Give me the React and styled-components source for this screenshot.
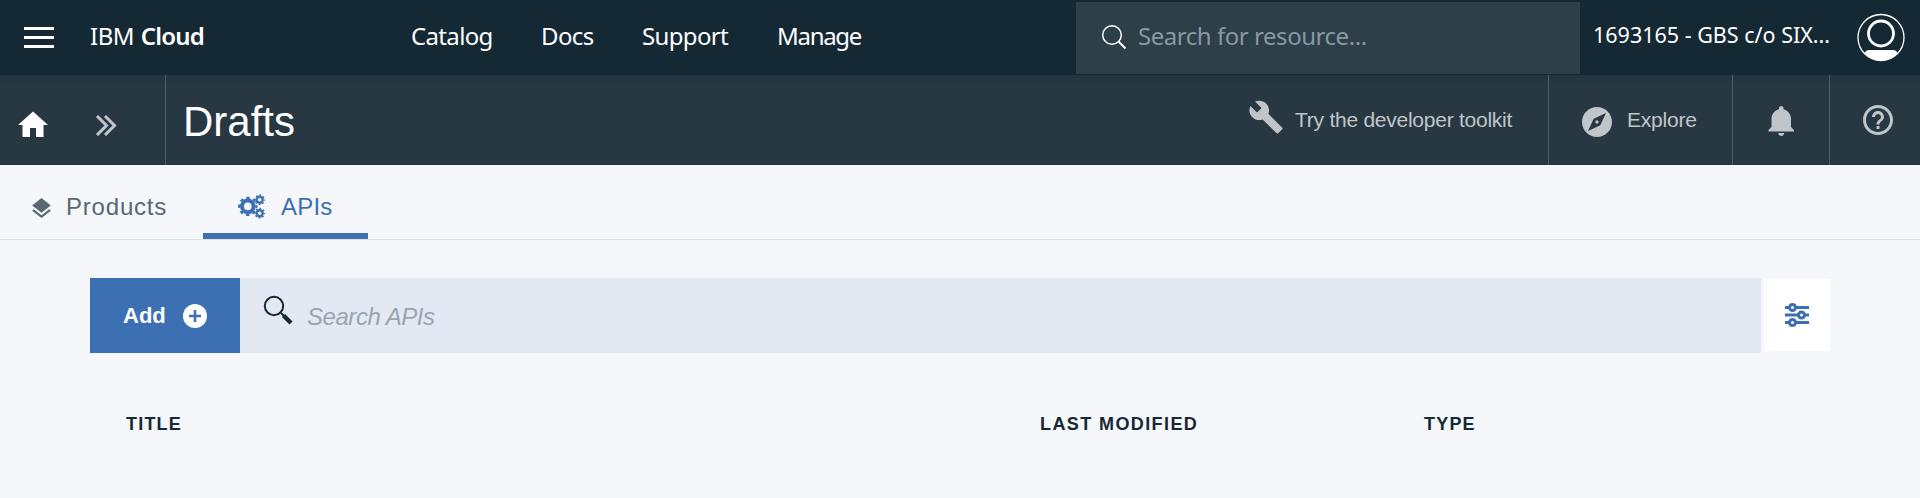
import React from "react";
import styled, { createGlobalStyle } from "styled-components";

const Global = createGlobalStyle`
  * { box-sizing: border-box; }
  html, body { margin: 0; padding: 0; background: #f5f7fb; }
  body { font-family: "Liberation Sans", Arial, sans-serif; color: #152935; height: 498px; overflow: hidden; }
`;

const plex = `"Noto Sans", sans-serif`;

const Page = styled.div`
  width: 1920px;
  height: 498px;
  background: #f5f7fb;
  overflow: hidden;
`;

const TopBar = styled.header`
  display: flex;
  height: 75px;
  background: #152935;
  color: #fff;
  font-family: ${plex};
`;

const MenuButton = styled.div`
  width: 90px;
  padding: 27px 0 0 24px;
`;

const MenuLine = styled.div`
  width: 30px;
  height: 3px;
  margin-bottom: 6px;
  background: #fff;
`;

const Label = styled.div`
  flex: none;
  width: ${(p) => p.$w}px;
  padding-top: ${(p) => p.$top || 0}px;
  font-size: ${(p) => p.$size || 24}px;
  line-height: 30px;
  letter-spacing: ${(p) => p.$ls || 0}px;
  white-space: nowrap;
`;

const BrandStrong = styled.b`
  font-weight: 600;
  letter-spacing: -0.8px;
  margin-left: 1px;
`;

const ResourceSearch = styled.div`
  display: flex;
  width: 504px;
  height: 72px;
  margin-top: 2px;
  padding-left: 24px;
  background: #2d3f49;
  color: #8897a2;
`;

const Account = styled.div`
  display: flex;
  width: 340px;
  padding-left: 13px;
`;

const Slot = styled.div`
  flex: none;
  display: flex;
  width: ${(p) => p.$w}px;
  padding: ${(p) => p.$pad};
  svg { display: block; flex: none; }
`;

const SubBar = styled.div`
  display: flex;
  height: 90px;
  background: linear-gradient(#23343e, #273842 12px, #273842 88px, #21323c);
  color: #c0c5c9;
`;

const SubCell = styled.div`
  flex: none;
  display: flex;
  width: ${(p) => p.$w}px;
  border-right: ${(p) => (p.$divider ? "1px solid #4e5d66" : "none")};
`;

const Title = styled.h1`
  margin: 0;
  padding: 23px 0 0 17px;
  color: #fff;
  font-size: 42px;
  font-weight: 400;
  line-height: 48px;
`;

const Tabs = styled.nav`
  display: flex;
  height: 75px;
  border-bottom: 1px solid #dde0e4;
`;

const Tab = styled.div`
  display: flex;
  width: ${(p) => p.$w}px;
  color: ${(p) => (p.$active ? "#3d70b2" : "#5a6872")};
  border-bottom: ${(p) => (p.$active ? "6px solid #3d70b2" : "none")};
`;

const Toolbar = styled.div`
  display: flex;
  margin: 38px 90px 0;
  height: 75px;
`;

const AddButton = styled.div`
  display: flex;
  width: 150px;
  padding-left: 33px;
  background: #3d70b2;
  color: #fff;
  font-weight: 700;
`;

const ApiSearch = styled.div`
  display: flex;
  width: 1521px;
  background: #e2e9f3;
  color: #9aa5ae;
  font-style: italic;
`;

const FilterButton = styled.div`
  width: 66px;
  height: 72px;
  margin: 1px 0 0 3px;
  padding: 24px 0 0 21px;
  background: #fff;
  svg { display: block; }
`;

const TableHead = styled.div`
  display: flex;
  padding: 56px 0 0 126px;
  font-weight: 700;
`;

const Icon = ({ size = 36, d }) => (
  <svg width={size} height={size} viewBox="0 0 24 24" fill="currentColor">
    <path d={d} />
  </svg>
);

const Gear = ({ cx, cy, r, w, teeth, tooth }) => {
  const outer = r + w / 2 + tooth / 2 - 0.3;
  const step = (2 * Math.PI * outer) / teeth / 2;
  return (
    <g fill="none" stroke="currentColor">
      <circle cx={cx} cy={cy} r={r} strokeWidth={w} />
      <circle
        cx={cx}
        cy={cy}
        r={outer}
        strokeWidth={tooth}
        strokeDasharray={`${step} ${step}`}
        strokeDashoffset={step / 2}
      />
    </g>
  );
};

export default function App() {
  return (
    <Page>
      <Global />
      <TopBar>
        <MenuButton>
          <MenuLine />
          <MenuLine />
          <MenuLine />
        </MenuButton>
        <Label $w={321} $top={21} $ls={-0.5}>
          IBM <BrandStrong>Cloud</BrandStrong>
        </Label>
        <Label $w={130} $top={21} $ls={-0.65}>Catalog</Label>
        <Label $w={101} $top={21} $ls={-0.6}>Docs</Label>
        <Label $w={135} $top={21} $ls={-0.65}>Support</Label>
        <Label $w={299} $top={21} $ls={-1.3}>Manage</Label>
        <ResourceSearch>
          <Slot $w={38} $pad="22px 0 0 1px">
            <svg width="26" height="26" viewBox="0 0 26 26" fill="none" stroke="#fff" strokeWidth="1.5">
              <circle cx="11" cy="11" r="9.3" />
              <path d="M17.5 17.5L24.5 24.5" strokeWidth="2" />
            </svg>
          </Slot>
          <Label $w={400} $top={19} $ls={-0.46}>Search for resource...</Label>
        </ResourceSearch>
        <Account>
          <Label $w={263} $top={20} $size={21.5}>1693165 - GBS c/o SIX...</Label>
          <Slot $w={50} $pad="13px 0 0 0">
            <svg width="50" height="50" viewBox="0 0 50 50" fill="none" stroke="#fff">
              <circle cx="25" cy="24.5" r="23" strokeWidth="1.3" />
              <circle cx="25" cy="20.5" r="12.5" strokeWidth="2.8" />
              <path d="M8.5 40Q10 37 13 37H37Q40 37 41.5 40Q35 47.5 25 47.5T8.5 40Z" fill="#fff" stroke="none" />
            </svg>
          </Slot>
        </Account>
      </TopBar>

      <SubBar>
        <SubCell $w={166} $divider>
          <Slot $w={95} $pad="32px 0 0 15px">
            <svg width="36" height="36" viewBox="0 0 24 24" fill="#fff">
              <path d="M10 20v-6h4v6h5v-8h3L12 3 2 12h3v8z" />
            </svg>
          </Slot>
          <Slot $w={40} $pad="39px 0 0 0">
            <svg width="22" height="23" viewBox="0 0 22 23" fill="none" stroke="currentColor" strokeWidth="3">
              <path d="M2 2L11.5 11.5L2 21M10 2L19.5 11.5L10 21" />
            </svg>
          </Slot>
        </SubCell>
        <SubCell $w={1081}>
          <Title>Drafts</Title>
        </SubCell>
        <SubCell $w={302} $divider>
          <Slot $w={48} $pad="24px 0 0 1px">
            <Icon d="M22.7 19l-9.1-9.1c.9-2.3.4-5-1.5-6.9-2-2-5-2.4-7.4-1.3L9 6 6 9 1.6 4.7C.4 7.1.9 10.1 2.9 12.1c1.9 1.9 4.6 2.4 6.9 1.5l9.1 9.1c.4.4 1 .4 1.4 0l2.3-2.3c.5-.4.5-1.1.1-1.4z" />
          </Slot>
          <Label $w={240} $top={30} $size={21} $ls={-0.25}>Try the developer toolkit</Label>
        </SubCell>
        <SubCell $w={184} $divider>
          <Slot $w={78} $pad="29px 0 0 30px">
            <Icon d="M12 10.9c-.61 0-1.1.49-1.1 1.1s.49 1.1 1.1 1.1c.61 0 1.1-.49 1.1-1.1s-.49-1.1-1.1-1.1zM12 2C6.48 2 2 6.48 2 12s4.48 10 10 10 10-4.48 10-10S17.52 2 12 2zm2.19 12.19L6 18l3.81-8.19L18 6l-3.81 8.19z" />
          </Slot>
          <Label $w={90} $top={30} $size={21} $ls={-0.2}>Explore</Label>
        </SubCell>
        <SubCell $w={97} $divider>
          <Slot $w={80} $pad="28px 0 0 31px">
            <Icon d="M11.5 22c1.1 0 2-.9 2-2h-4c0 1.1.9 2 2 2zm6.5-6v-5.5c0-3.07-2.13-5.64-5-6.32V3.5c0-.83-.67-1.5-1.5-1.5S10 2.67 10 3.5v.68c-2.87.68-5 3.25-5 6.32V16l-2 2v1h17v-1l-2-2z" />
          </Slot>
        </SubCell>
        <SubCell $w={90}>
          <Slot $w={80} $pad="27px 0 0 30px">
            <Icon d="M11 18h2v-2h-2v2zm1-16C6.48 2 2 6.48 2 12s4.48 10 10 10 10-4.48 10-10S17.52 2 12 2zm0 18c-4.41 0-8-3.59-8-8s3.59-8 8-8 8 3.59 8 8-3.59 8-8 8zm0-14c-2.21 0-4 1.79-4 4h2c0-1.1.9-2 2-2s2 .9 2 2c0 2-3 1.75-3 5h2c0-2.25 3-2.5 3-5 0-2.21-1.79-4-4-4z" />
          </Slot>
        </SubCell>
      </SubBar>

      <Tabs>
        <Tab $w={203}>
          <Slot $w={66} $pad="31px 0 0 29px">
            <Icon size={25} d="M11.99 18.54l-7.37-5.73L3 14.07l9 7 9-7-1.63-1.27-7.38 5.74zM12 16l7.36-5.73L21 9l-9-7-9 7 1.63 1.27L12 16z" />
          </Slot>
          <Label $w={120} $top={27} $ls={0.8}>Products</Label>
        </Tab>
        <Tab $w={165} $active>
          <Slot $w={78} $pad="29px 0 0 35px">
            <svg width="28" height="25" viewBox="0 0 28 25">
              <Gear cx={9.8} cy={12.4} r={5.8} w={4} teeth={8} tooth={2.2} />
              <Gear cx={21.7} cy={5.7} r={3} w={2.4} teeth={8} tooth={1.5} />
              <Gear cx={21.7} cy={19.2} r={3} w={2.4} teeth={8} tooth={1.5} />
            </svg>
          </Slot>
          <Label $w={70} $top={27} $ls={0.2}>APIs</Label>
        </Tab>
      </Tabs>

      <Toolbar>
        <AddButton>
          <Label $w={57} $top={23} $size={22}>Add</Label>
          <Slot $w={40} $pad="26px 0 0 3px">
            <svg width="24" height="24" viewBox="0 0 24 24">
              <circle cx="12" cy="12" r="12" fill="#fff" />
              <path d="M12 6V18M6 12H18" stroke="#3d70b2" strokeWidth="2.6" />
            </svg>
          </Slot>
        </AddButton>
        <ApiSearch>
          <Slot $w={67} $pad="17px 0 0 23px">
            <svg width="30" height="30" viewBox="0 0 30 30" fill="none" stroke="#152935">
              <circle cx="11" cy="11" r="9.2" strokeWidth="2" />
              <path d="M18 18L21 21" strokeWidth="1.8" />
              <path d="M20.5 20.5L28 28" strokeWidth="4.4" />
            </svg>
          </Slot>
          <Label $w={300} $top={24} $ls={-0.45}>Search APIs</Label>
        </ApiSearch>
        <FilterButton>
          <svg width="24" height="24" viewBox="0 0 24 24" fill="#fff" stroke="#3d70b2" strokeWidth="3">
            <path d="M0 4.5H24M0 12H24M0 19.5H24" />
            <circle cx="7.5" cy="4.5" r="3" />
            <circle cx="16.5" cy="12" r="3" />
            <circle cx="7.5" cy="19.5" r="3" />
          </svg>
        </FilterButton>
      </Toolbar>

      <TableHead>
        <Label $w={914} $size={18} $ls={1.2}>TITLE</Label>
        <Label $w={384} $size={18} $ls={1.4}>LAST MODIFIED</Label>
        <Label $w={100} $size={18} $ls={1.2}>TYPE</Label>
      </TableHead>
    </Page>
  );
}
